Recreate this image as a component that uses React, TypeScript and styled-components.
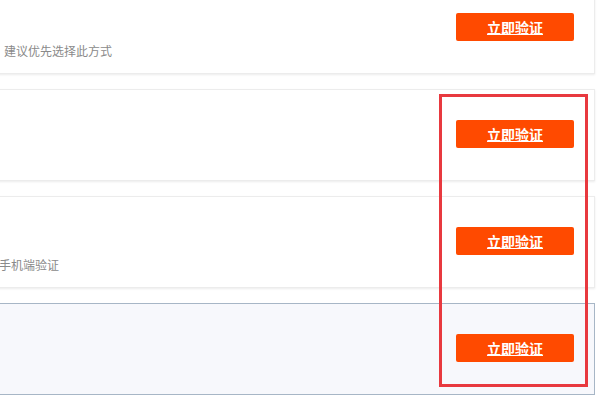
import React from "react";
import styled, { createGlobalStyle } from "styled-components";

const Global = createGlobalStyle`
  html, body { margin: 0; padding: 0; background: #ffffff; overflow: hidden; }
  body { font-family: "Noto Sans CJK SC", "Noto Sans", sans-serif; }
`;

const Page = styled.div`
  position: relative;
  width: 598px;
  height: 400px;
  overflow: hidden;
`;

const List = styled.div`
  display: flex;
  flex-direction: column;
  gap: 15px;
  margin-top: -18px;
  margin-left: -30px;
  width: 625px;
`;

const Card = styled.div<{ $active?: boolean }>`
  box-sizing: border-box;
  height: 92px;
  display: flex;
  align-items: flex-start;
  justify-content: space-between;
  padding: 30px 20px 0 0;
  background: ${(p) => (p.$active ? "#f7f8fc" : "#ffffff")};
  border: 1px solid ${(p) => (p.$active ? "#a7b6c6" : "#ececec")};
  box-shadow: ${(p) => (p.$active ? "none" : "0 1px 2px rgba(0,0,0,0.08)")};
`;

const Info = styled.div`
  display: flex;
  flex-direction: column;
  padding-top: 30px;
`;

const Desc = styled.div<{ $indent: number }>`
  padding-left: ${(p) => p.$indent}px;
  font-size: 12px;
  line-height: 16px;
  color: #8a8a8a;
  white-space: nowrap;
`;

const VerifyButton = styled.button`
  box-sizing: border-box;
  width: 118px;
  height: 28px;
  border: none;
  border-radius: 2px;
  background: #ff4a00;
  color: #ffffff;
  font-family: "Noto Sans CJK SC", sans-serif;
  font-size: 14px;
  font-weight: 700;
  line-height: 28px;
  padding: 0;
  text-decoration: underline;
  text-underline-offset: 1px;
  text-decoration-thickness: 1px;
  cursor: pointer;
`;

const Highlight = styled.div`
  position: absolute;
  left: 439px;
  top: 94px;
  width: 149px;
  height: 293px;
  box-sizing: border-box;
  border: 3px solid #e8393f;
  pointer-events: none;
`;

type Item = { desc?: string; indent?: number; active?: boolean };

const items: Item[] = [
  { desc: "建议优先选择此方式", indent: 33 },
  {},
  { desc: "请在手机端验证", indent: 4 },
  { active: true },
];

export default function App() {
  return (
    <Page>
      <Global />
      <List>
        {items.map((it, i) => (
          <Card key={i} $active={it.active}>
            <Info>{it.desc && <Desc $indent={it.indent ?? 0}>{it.desc}</Desc>}</Info>
            <VerifyButton>立即验证</VerifyButton>
          </Card>
        ))}
      </List>
      <Highlight />
    </Page>
  );
}
